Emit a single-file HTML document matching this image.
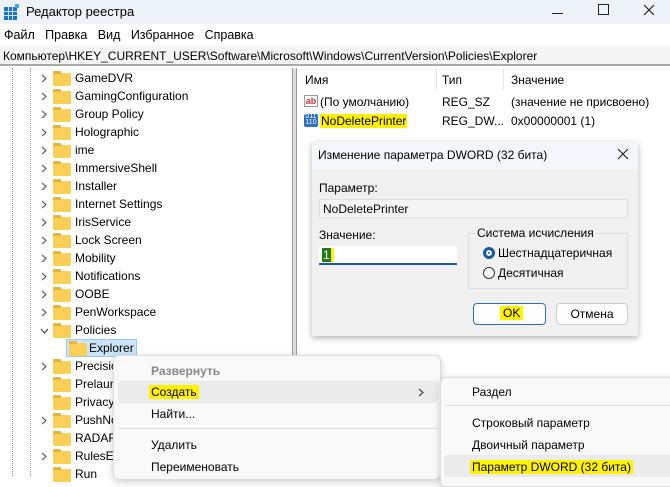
<!DOCTYPE html><html><head><meta charset="utf-8"><style>
*{margin:0;padding:0;box-sizing:border-box}
body{width:670px;height:476px;overflow:hidden;background:#fff;font-family:"Liberation Sans",sans-serif;font-size:12px;color:#000;position:relative}
.a{position:absolute;white-space:nowrap}
.row{position:absolute;height:18px;line-height:18px}
.fold{position:absolute;width:18px;height:13px;background:#f9cf55;border-radius:1px}
.fold:before{content:"";position:absolute;left:0;top:-2px;width:8px;height:3px;background:#e9b43a;border-radius:1px 1px 0 0}
.arr{position:absolute;color:#666;font-size:14px}
.hl{background:#fff200}
</style></head><body>
<div class="a" style="left:0;top:0;width:670px;height:24px;background:#eef3f9"></div>
<svg class="a" style="left:4px;top:4px" width="16" height="16"><rect x="0" y="3" width="13" height="13" fill="#1a73c9"/><g stroke="#cfe3f7" stroke-width="1"><line x1="4.5" y1="3" x2="4.5" y2="16"/><line x1="8.5" y1="3" x2="8.5" y2="16"/><line x1="0" y1="7.5" x2="13" y2="7.5"/><line x1="0" y1="11.5" x2="13" y2="11.5"/></g><rect x="11" y="0" width="4" height="4" fill="#4aa3e8"/></svg>
<div class="a" style="left:26px;top:4px;font-size:13px">Редактор реестра</div>
<div class="a" style="left:552px;top:13px;width:11px;border-top:1px solid #222"></div>
<div class="a" style="left:598px;top:4px;width:11px;height:11px;border:1.2px solid #222"></div>
<svg class="a" style="left:643px;top:4px" width="12" height="12"><path d="M1 1L11 11M11 1L1 11" stroke="#222" stroke-width="1.2"/></svg>
<div class="a" style="left:4px;top:28px;font-size:12.5px">Файл&nbsp;&nbsp;&nbsp;Правка&nbsp;&nbsp;&nbsp;Вид&nbsp;&nbsp;&nbsp;Избранное&nbsp;&nbsp;&nbsp;Справка</div>
<div class="a" style="left:0;top:45px;width:670px;height:21px;background:#f5f5f5;border-bottom:2px solid #aaa"></div>
<div class="a" style="left:3px;top:49px;font-size:12px">Компьютер\HKEY_CURRENT_USER\Software\Microsoft\Windows\CurrentVersion\Policies\Explorer</div>
<div class="a" style="left:292px;top:68px;width:5px;height:408px;background:#e0e0e0;border-left:1px solid #999;border-right:1px solid #999"></div>
<div class="a" style="left:12px;top:68px;height:408px;border-left:1px dotted #999"></div>
<div class="a" style="left:30px;top:68px;height:408px;border-left:1px dotted #999"></div>
<div id="tree"></div>
<script>
var items=[["GameDVR",1],["GamingConfiguration",1],["Group Policy",1],["Holographic",1],["ime",1],["ImmersiveShell",1],["Installer",1],["Internet Settings",1],["IrisService",1],["Lock Screen",1],["Mobility",1],["Notifications",1],["OOBE",1],["PenWorkspace",1],["Policies",2],["Explorer",3],["Precision",1],["Prelaunch",0],["Privacy",0],["PushNotifications",1],["RADAR",0],["RulesEngine",1],["Run",0]];
var h="";items.forEach(function(it,i){var y=69+i*18;var lv=it[1]==3;var fx=lv?69:53,tx=lv?89:75;
if(it[1]==1)h+='<svg class="a" style="left:41px;top:'+(y+5)+'px" width="6" height="9"><path d="M1 1L5 4.5L1 8" stroke="#666" fill="none" stroke-width="1.2"/></svg>';
if(it[1]==2)h+='<svg class="a" style="left:40px;top:'+(y+7)+'px" width="9" height="6"><path d="M1 1L4.5 5L8 1" stroke="#444" fill="none" stroke-width="1.2"/></svg>';
if(lv)h+='<div class="a" style="left:66px;top:'+(y)+'px;width:71px;height:18px;background:#cce4f7;border:1px solid #99c9ef"></div>';
h+='<div class="fold" style="left:'+fx+'px;top:'+(y+4)+'px"></div><div class="row" style="left:'+tx+'px;top:'+y+'px">'+it[0]+'</div>';});
document.getElementById("tree").innerHTML=h;
</script>
<div class="a" style="left:305px;top:73px">Имя</div>
<div class="a" style="left:442px;top:73px">Тип</div>
<div class="a" style="left:511px;top:73px">Значение</div>
<div class="a" style="left:436px;top:68px;height:22px;border-left:1px solid #e5e5e5"></div>
<div class="a" style="left:503px;top:68px;height:22px;border-left:1px solid #e5e5e5"></div>
<div class="a" style="left:304px;top:95px;width:14px;height:12px;border:1px solid #999;font-size:9px;color:#c33;font-weight:bold;line-height:10px;text-align:center;background:#fff">ab</div>
<div class="a" style="left:320px;top:95px">(По умолчанию)</div>
<div class="a" style="left:442px;top:95px">REG_SZ</div>
<div class="a" style="left:511px;top:95px">(значение не присвоено)</div>
<div class="a" style="left:304px;top:114px;width:14px;height:13px;background:#2e6fc0;border-radius:2px;color:#fff;font-size:7px;line-height:6px;text-align:center">011<br>110</div>
<div class="a hl" style="left:320px;top:114px;padding:0 1px">NoDeletePrinter</div>
<div class="a" style="left:442px;top:114px">REG_DW...</div>
<div class="a" style="left:511px;top:114px">0x00000001 (1)</div>
<div class="a" style="left:312px;top:142px;width:326px;height:194px;background:#f0f0f0;box-shadow:0 2px 6px rgba(0,0,0,.3)"></div>
<div class="a" style="left:312px;top:142px;width:326px;height:28px;background:#f3f6fa"></div>
<div class="a" style="left:318px;top:148px;font-size:12px">Изменение параметра DWORD (32 бита)</div>
<svg class="a" style="left:617px;top:148px" width="12" height="12"><path d="M1 1L11 11M11 1L1 11" stroke="#222" stroke-width="1.1"/></svg>
<div class="a" style="left:319px;top:181px">Параметр:</div>
<div class="a" style="left:319px;top:199px;width:309px;height:19px;background:#f5f5f5;border:1px solid #ddd;padding:2px 3px">NoDeletePrinter</div>
<div class="a" style="left:319px;top:228px">Значение:</div>
<div class="a" style="left:319px;top:246px;width:138px;height:19px;background:#fff;border-bottom:2px solid #1a5aa0"></div>
<div class="a" style="left:322px;top:248px;background:#1f7a1f;color:#fff;padding:0 1px;border-right:3px solid #fff200">1</div>
<div class="a" style="left:468px;top:233px;width:160px;height:56px;border:1px solid #ddd"></div>
<div class="a" style="left:475px;top:226px;background:#f0f0f0;padding:0 2px">Система исчисления</div>
<div class="a" style="left:483px;top:247px;width:12px;height:12px;border-radius:50%;background:#1a5aa0;border:3px solid #1a5aa0;box-shadow:inset 0 0 0 2px #fff"></div>
<div class="a" style="left:498px;top:246px">Шестнадцатеричная</div>
<div class="a" style="left:483px;top:267px;width:12px;height:12px;border-radius:50%;border:1px solid #333;background:#fff"></div>
<div class="a" style="left:498px;top:266px">Десятичная</div>
<div class="a" style="left:473px;top:303px;width:73px;height:22px;background:#fdfdfd;border:1px solid #2a6fbf;border-radius:4px"></div>
<div class="a hl" style="left:500px;top:306px;padding:0 3px">OK</div>
<div class="a" style="left:556px;top:303px;width:72px;height:22px;background:#fdfdfd;border:1px solid #ccc;border-radius:4px;text-align:center;line-height:20px">Отмена</div>
<div class="a" style="left:113px;top:355px;width:328px;height:125px;background:#f9f9f9;border:1px solid #ddd;border-radius:6px;box-shadow:0 2px 8px rgba(0,0,0,.2)"></div>
<div class="a" style="left:151px;top:364px;color:#888;font-weight:bold">Развернуть</div>
<div class="a" style="left:118px;top:381px;width:320px;height:22px;background:#ebebeb;border-radius:4px"></div>
<div class="a hl" style="left:149px;top:385px;padding:0 2px">Создать</div>
<svg class="a" style="left:418px;top:388px" width="6" height="9"><path d="M1 1L5 4.5L1 8" stroke="#444" fill="none" stroke-width="1.2"/></svg>
<div class="a" style="left:151px;top:407px">Найти...</div>
<div class="a" style="left:118px;top:428px;width:320px;border-top:1px solid #ddd"></div>
<div class="a" style="left:151px;top:438px">Удалить</div>
<div class="a" style="left:151px;top:460px">Переименовать</div>
<div class="a" style="left:440px;top:377px;width:240px;height:110px;background:#f9f9f9;border:1px solid #ddd;border-radius:6px;box-shadow:0 2px 8px rgba(0,0,0,.2)"></div>
<div class="a" style="left:472px;top:385px">Раздел</div>
<div class="a" style="left:446px;top:405px;width:230px;border-top:1px solid #ddd"></div>
<div class="a" style="left:472px;top:416px">Строковый параметр</div>
<div class="a" style="left:472px;top:438px">Двоичный параметр</div>
<div class="a" style="left:444px;top:455px;width:230px;height:22px;background:#ebebeb;border-radius:4px"></div>
<div class="a hl" style="left:470px;top:460px;padding:0 2px">Параметр DWORD (32 бита)</div>
</body></html>
